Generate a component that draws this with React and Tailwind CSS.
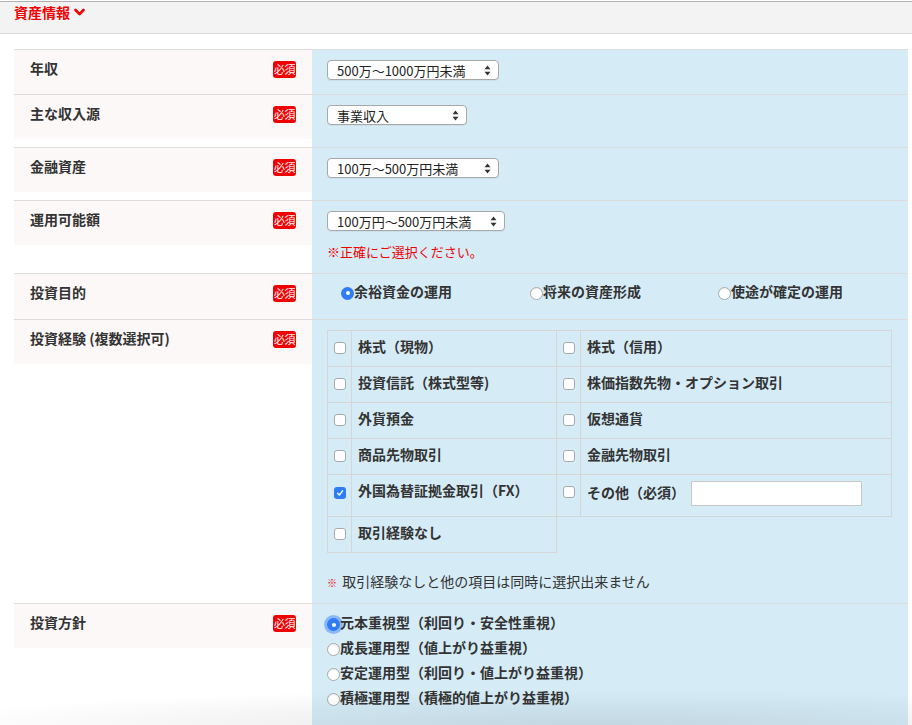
import { useState } from 'react';

const FONT = "font-['Noto_Sans_CJK_JP','Noto_Sans',sans-serif]";

const Badge = () => (
  <span className="w-[23px] h-[17px] rounded-[3px] bg-[#f00000] text-white text-[11px] leading-[17px] text-center font-normal tracking-[-0.5px]">
    必須
  </span>
);

const SelectArrows = () => (
  <svg width="7" height="11" viewBox="0 0 7 11" className="ml-auto">
    <path d="M3.5 0.5 L6.5 4.2 L0.5 4.2 Z" fill="#333" />
    <path d="M3.5 10.5 L6.5 6.8 L0.5 6.8 Z" fill="#333" />
  </svg>
);

const FakeSelect = ({ value, width }) => (
  <div
    className={`h-[20px] ${width} flex items-center pl-[9px] pr-[7px] bg-white border border-[#a8a8a8] rounded-[4px] text-[13px] text-[#222] leading-none shadow-[0_1px_0_rgba(0,0,0,0.05)]`}
  >
    <span>{value}</span>
    <SelectArrows />
  </div>
);

const Radio = ({ checked, focus }) =>
  checked ? (
    <span
      className={`w-[13px] h-[13px] rounded-full bg-[#2f7cf6] flex items-center justify-center shrink-0 ${
        focus ? 'shadow-[0_0_0_3px_rgba(80,140,250,0.55)]' : ''
      }`}
    >
      <span className="w-[4px] h-[4px] rounded-full bg-white" />
    </span>
  ) : (
    <span className="w-[13px] h-[13px] rounded-full bg-white border border-[#a9a9a9] shrink-0 shadow-[inset_0_1px_1px_rgba(0,0,0,0.08)]" />
  );

const Checkbox = ({ checked }) =>
  checked ? (
    <span className="w-[12px] h-[12px] rounded-[3px] bg-[#2f7cf6] flex items-center justify-center">
      <svg width="8" height="8" viewBox="0 0 8 8">
        <path d="M1.5 4.2 L3.3 6 L6.6 1.8" stroke="white" strokeWidth="1.3" fill="none" strokeLinecap="round" strokeLinejoin="round" />
      </svg>
    </span>
  ) : (
    <span className="w-[12px] h-[12px] rounded-[3px] bg-white border border-[#a9a9a9] block" />
  );

const Row = ({ label, height, labelH = 'h-[44px]', children }) => (
  <div className={`flex border-t border-[#dcdcdc] ${height}`}>
    <div className="w-[298px] shrink-0">
      <div className={`${labelH} bg-[#fcf8f7] pt-[10px] pl-[16px] pr-[16px] flex justify-between items-start`}>
        <span className="h-[20px] flex items-center -mt-[2px] text-[14px] font-bold text-[#333]">{label}</span>
        <span className="h-[20px] flex items-center -mt-[1px]">
          <Badge />
        </span>
      </div>
    </div>
    <div className="flex-1 bg-[#d5ecf7]">{children}</div>
  </div>
);

const experience = [
  ['株式（現物）', '株式（信用）'],
  ['投資信託（株式型等)', '株価指数先物・オプション取引'],
  ['外貨預金', '仮想通貨'],
  ['商品先物取引', '金融先物取引'],
];

const policies = [
  '元本重視型（利回り・安全性重視）',
  '成長運用型（値上がり益重視）',
  '安定運用型（利回り・値上がり益重視）',
  '積極運用型（積極的値上がり益重視）',
];

export default function App() {
  const [other, setOther] = useState('');

  return (
    <div className={`relative w-full h-[725px] overflow-hidden bg-white ${FONT}`}>
      {/* Section header */}
      <div className="mt-[1px] h-[33px] bg-[#f3f3f3] border-t border-b border-t-[#b0b0b0] border-b-[#dcdcdc] px-[14px] flex items-start">
        <span className="flex items-center gap-[4px] text-[14px] font-bold text-[#f00000] leading-[20px]">
          資産情報
          <svg width="11" height="9" viewBox="0 0 11 9" className="mt-[1px]">
            <path d="M1.5 2 L5.5 6.2 L9.5 2" stroke="#f00000" strokeWidth="2.6" fill="none" strokeLinecap="round" strokeLinejoin="round" />
          </svg>
        </span>
      </div>

      <div className="mt-[15px] ml-[14px] mr-[4px]">
        <Row label="年収" height="h-[45px]">
          <div className="pt-[10px] pl-[15px]">
            <FakeSelect value="500万～1000万円未満" width="w-[172px]" />
          </div>
        </Row>

        <Row label="主な収入源" height="h-[53px]">
          <div className="pt-[10px] pl-[15px]">
            <FakeSelect value="事業収入" width="w-[140px]" />
          </div>
        </Row>

        <Row label="金融資産" height="h-[53px]">
          <div className="pt-[10px] pl-[15px]">
            <FakeSelect value="100万～500万円未満" width="w-[172px]" />
          </div>
        </Row>

        <Row label="運用可能額" height="h-[73px]">
          <div className="pt-[10px] pl-[15px]">
            <FakeSelect value="100万円～500万円未満" width="w-[178px]" />
            <p className="mt-[11px] text-[13px] leading-[20px] text-[#f00000]">※正確にご選択ください。</p>
          </div>
        </Row>

        <Row label="投資目的" height="h-[46px]" labelH="h-[45px]">
          <div className="pt-[9px] pl-[29px] flex text-[14px] font-bold text-[#333] leading-[20px]">
            <label className="w-[189px] flex items-center">
              <Radio checked />
              <span className="-mt-[2px] mb-[2px]">余裕資金の運用</span>
            </label>
            <label className="w-[188px] flex items-center">
              <Radio />
              <span className="-mt-[2px] mb-[2px]">将来の資産形成</span>
            </label>
            <label className="flex items-center">
              <Radio />
              <span className="-mt-[2px] mb-[2px]">使途が確定の運用</span>
            </label>
          </div>
        </Row>

        <Row label="投資経験 (複数選択可)" height="h-[284px]">
          <div className="pt-[10px] pl-[15px] text-[14px] text-[#333]">
            <table className="border-collapse w-[565px] font-bold">
              <tbody>
                {experience.map((r, i) => (
                  <tr key={i} className="h-[36px]">
                    <td className="w-[24px] border border-[#d6d6d6] align-top pt-[11px] pl-[6px]">
                      <Checkbox />
                    </td>
                    <td className="w-[205px] border border-[#d6d6d6] align-top pt-[5px] pl-[6px] leading-[20px]">{r[0]}</td>
                    <td className="w-[24px] border border-[#d6d6d6] align-top pt-[11px] pl-[6px]">
                      <Checkbox />
                    </td>
                    <td className="border border-[#d6d6d6] align-top pt-[5px] pl-[6px] leading-[20px]">{r[1]}</td>
                  </tr>
                ))}
                <tr className="h-[42px]">
                  <td className="border border-[#d6d6d6] align-top pt-[12px] pl-[6px]">
                    <Checkbox checked />
                  </td>
                  <td className="border border-[#d6d6d6] align-top pt-[5px] pl-[6px] leading-[20px]">外国為替証拠金取引（FX）</td>
                  <td className="border border-[#d6d6d6] align-top pt-[11px] pl-[6px]">
                    <Checkbox />
                  </td>
                  <td className="border border-[#d6d6d6] align-top pt-[6px] pl-[6px]">
                    <div className="flex items-center gap-[6px] leading-[20px]">
                      <span className="-mt-[4px]">その他（必須）</span>
                      <input
                        value={other}
                        onChange={(e) => setOther(e.target.value)}
                        className="w-[171px] h-[25px] bg-white border border-[#c8c8c8] outline-none px-[4px] text-[13px] font-normal"
                      />
                    </div>
                  </td>
                </tr>
                <tr className="h-[36px]">
                  <td className="border border-[#d6d6d6] align-top pt-[11px] pl-[6px]">
                    <Checkbox />
                  </td>
                  <td className="border border-[#d6d6d6] align-top pt-[5px] pl-[6px] leading-[20px]">取引経験なし</td>
                  <td />
                  <td />
                </tr>
              </tbody>
            </table>
            <p className="mt-[18px] leading-[20px] text-[14px] text-[#333]">
              <span className="text-[10px] text-[#f00000] mr-[2px]">※</span> 取引経験なしと他の項目は同時に選択出来ません
            </p>
          </div>
        </Row>

        <Row label="投資方針" height="h-[140px]">
          <div className="pt-[8px] pl-[15px] text-[14px] font-bold text-[#333] leading-[25px]">
            {policies.map((p, i) => (
              <label key={p} className="flex items-center">
                <Radio checked={i === 0} focus={i === 0} />
                <span className="-mt-[2px] mb-[2px]">{p}</span>
              </label>
            ))}
          </div>
        </Row>
      </div>

      {/* bottom fade shadow */}
      <div className="pointer-events-none absolute left-0 right-0 bottom-0 h-[36px] bg-[radial-gradient(ellipse_75%_100%_at_65%_100%,rgba(0,0,0,0.09),transparent)]" />
    </div>
  );
}
